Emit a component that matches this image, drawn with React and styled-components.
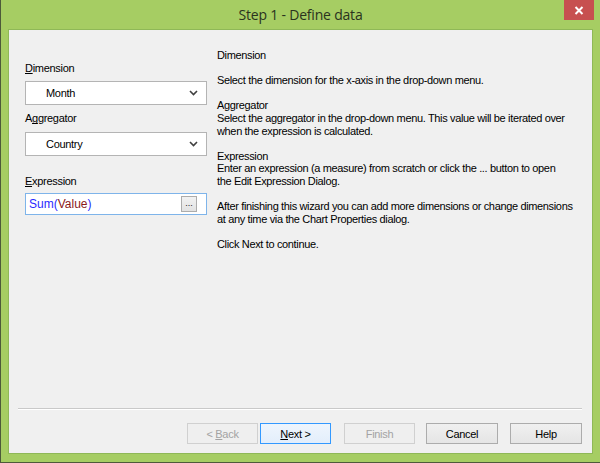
import React from "react";
import styled, { createGlobalStyle, css } from "styled-components";

const Global = createGlobalStyle`
  html, body { margin: 0; padding: 0; background: #a6cd63; }
  body { font-family: "Liberation Sans", Arial, sans-serif; }
`;

const Window = styled.div`
  width: 600px;
  height: 463px;
  box-sizing: border-box;
  background: #a6cd63;
  border-left: 1px solid #4d5a3a;
  border-bottom: 1px solid #4d5a3a;
  display: flex;
  flex-direction: column;
`;

const TitleBar = styled.div`
  position: relative;
  height: 29px;
  flex: none;
  display: flex;
  align-items: center;
  justify-content: center;
`;

const Title = styled.div`
  font-family: "Open Sans", "Noto Sans", sans-serif;
  font-size: 14px;
  color: #2a331e;
  margin-top: -1px;
  letter-spacing: -0.2px;
`;

const CloseButton = styled.div`
  position: absolute;
  top: 0;
  right: 6px;
  width: 30px;
  height: 20px;
  background: #c75050;
  display: flex;
  align-items: center;
  justify-content: center;
`;

const Panel = styled.div`
  flex: 1;
  margin: 0 7px 8px 7px;
  border: 1px solid #8fb857;
  background: #f0f0f0;
  display: flex;
  flex-direction: column;
  font-family: "Liberation Sans", Arial, sans-serif;
  font-size: 11px;
  color: #000;
  u {
    text-decoration: underline;
    text-decoration-skip-ink: none;
    text-underline-offset: 1px;
  }
`;

const Main = styled.div`
  flex: 1;
  display: flex;
  gap: 10px;
  padding: 0 0 0 16px;
`;

const LeftCol = styled.div`
  width: 182px;
  flex: none;
  padding-top: 32px;
  display: flex;
  flex-direction: column;
`;

const Label = styled.div`
  height: 13px;
  line-height: 13px;
  margin-bottom: ${(p) => p.$mb ?? 6}px;
  margin-top: ${(p) => p.$mt || 0}px;
  letter-spacing: -0.3px;
`;

const Select = styled.div`
  height: 24px;
  box-sizing: border-box;
  border: 1px solid #b4b4b4;
  background: #fff;
  display: flex;
  align-items: center;
  padding-left: 20px;
  padding-right: 8px;
  justify-content: space-between;
  letter-spacing: -0.3px;
`;

const ExprBox = styled.div`
  height: 22px;
  box-sizing: border-box;
  border: 1px solid #7eb4ea;
  background: #fff;
  display: flex;
  align-items: center;
  padding-left: 3px;
  padding-right: 9px;
  justify-content: space-between;
  font-size: 12px;
`;

const Fn = styled.span`
  color: #2a2aff;
`;
const Arg = styled.span`
  color: #8b1a1a;
`;

const DotsButton = styled.div`
  width: 16px;
  height: 16px;
  box-sizing: border-box;
  border: 1px solid #acacac;
  background: linear-gradient(#f2f2f2, #e2e2e2);
  font-size: 9px;
  line-height: 12px;
  text-align: center;
  color: #222;
`;

const HelpText = styled.div`
  padding-top: 19px;
  line-height: 12.6px;
  letter-spacing: -0.35px;
  p { margin: 0 0 12.6px 0; }
`;

const Separator = styled.div`
  margin: 1px 10px 0 9px;
  height: 1px;
  background: #c9c9c9;
  border-bottom: 1px solid #ffffff;
`;

const ButtonRow = styled.div`
  display: flex;
  justify-content: flex-end;
  padding: 13px 10px 9px 0;
`;

const Button = styled.div`
  width: ${(p) => p.$w || 71}px;
  height: 21px;
  box-sizing: border-box;
  margin-left: ${(p) => p.$ml}px;
  display: flex;
  align-items: center;
  justify-content: center;
  font-size: 11px;
  letter-spacing: -0.3px;
  border: 1px solid #acacac;
  background: linear-gradient(#f0f0f0, #e5e5e5);
  color: #000;
  ${(p) =>
    p.$disabled &&
    css`
      border-color: #d0d0d0;
      background: #efefef;
      color: #a3a3a3;
    `}
  ${(p) =>
    p.$default &&
    css`
      border-color: #3399ff;
      background: linear-gradient(#eef5fd, #e3eefb);
    `}
`;

const Chevron = () => (
  <svg width="9" height="6" viewBox="0 0 9 6">
    <path d="M1 1 L4.5 4.5 L8 1" fill="none" stroke="#404040" strokeWidth="1.6" />
  </svg>
);

export default function App() {
  return (
    <>
      <Global />
      <Window>
        <TitleBar>
          <Title>Step 1 - Define data</Title>
          <CloseButton>
            <svg width="10" height="9" viewBox="0 0 10 9">
              <path d="M1.5 1 L8.5 8 M8.5 1 L1.5 8" stroke="#fff" strokeWidth="2" />
            </svg>
          </CloseButton>
        </TitleBar>
        <Panel>
          <Main>
            <LeftCol>
              <Label>
                <u>D</u>imension
              </Label>
              <Select>
                <span>Month</span>
                <Chevron />
              </Select>
              <Label $mt={7} $mb={7}>
                A<u>g</u>gregator
              </Label>
              <Select>
                <span>Country</span>
                <Chevron />
              </Select>
              <Label $mt={19} $mb={5}>
                <u>E</u>xpression
              </Label>
              <ExprBox>
                <span>
                  <Fn>Sum(</Fn>
                  <Arg>Value</Arg>
                  <Fn>)</Fn>
                </span>
                <DotsButton>...</DotsButton>
              </ExprBox>
            </LeftCol>
            <HelpText>
              <p>Dimension</p>
              <p>Select the dimension for the x-axis in the drop-down menu.</p>
              <p>
                Aggregator
                <br />
                Select the aggregator in the drop-down menu. This value will be iterated over
                <br />
                when the expression is calculated.
              </p>
              <p>
                Expression
                <br />
                Enter an expression (a measure) from scratch or click the ... button to open
                <br />
                the Edit Expression Dialog.
              </p>
              <p>
                After finishing this wizard you can add more dimensions or change dimensions
                <br />
                at any time via the Chart Properties dialog.
              </p>
              <p>Click Next to continue.</p>
            </HelpText>
          </Main>
          <Separator />
          <ButtonRow>
            <Button $disabled $ml={0}>
              &lt;&nbsp;<u>B</u>ack
            </Button>
            <Button $default $ml={2}>
              <u>N</u>ext &gt;
            </Button>
            <Button $disabled $ml={13}>
              Finish
            </Button>
            <Button $w={72} $ml={11}>Cancel</Button>
            <Button $w={72} $ml={12}>Help</Button>
          </ButtonRow>
        </Panel>
      </Window>
    </>
  );
}
